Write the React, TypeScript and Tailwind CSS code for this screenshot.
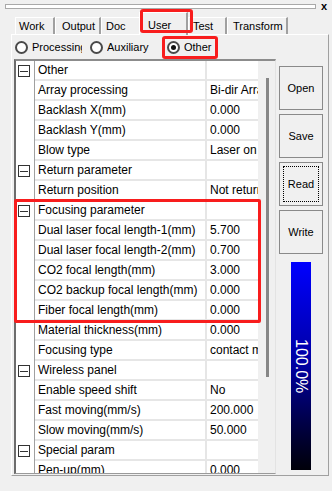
import React from 'react';

type Row = { name: string; value?: string; cat?: boolean };

const rows: Row[] = [
  { name: 'Other', cat: true },
  { name: 'Array processing', value: 'Bi-dir Array' },
  { name: 'Backlash X(mm)', value: '0.000' },
  { name: 'Backlash Y(mm)', value: '0.000' },
  { name: 'Blow type', value: 'Laser on blow' },
  { name: 'Return parameter', cat: true },
  { name: 'Return position', value: 'Not return' },
  { name: 'Focusing parameter', cat: true },
  { name: 'Dual laser focal length-1(mm)', value: '5.700' },
  { name: 'Dual laser focal length-2(mm)', value: '0.700' },
  { name: 'CO2 focal length(mm)', value: '3.000' },
  { name: 'CO2 backup focal length(mm)', value: '0.000' },
  { name: 'Fiber focal length(mm)', value: '0.000' },
  { name: 'Material thickness(mm)', value: '0.000' },
  { name: 'Focusing type', value: 'contact mode' },
  { name: 'Wireless panel', cat: true },
  { name: 'Enable speed shift', value: 'No' },
  { name: 'Fast moving(mm/s)', value: '200.000' },
  { name: 'Slow moving(mm/s)', value: '50.000' },
  { name: 'Special param', cat: true },
  { name: 'Pen-up(mm)', value: '0.000' },
];

const tabs = [
  { label: 'Work', w: 'w-[40px]', pl: 'pl-[3px]' },
  { label: 'Output', w: 'w-[46px]', pl: 'pl-[6px]' },
  { label: 'Doc', w: 'w-[40px]', pl: 'pl-[4px]' },
  { label: 'User', w: 'w-[49px]', pl: 'pl-[8px]', active: true },
  { label: 'Test', w: 'w-[39px]', pl: 'pl-[4px]' },
  { label: 'Transform', w: 'w-[61px]', pl: 'pl-[5px]' },
];

function Minus() {
  return (
    <div className="w-[12px] h-[12px] border border-[#333] bg-white flex items-center justify-center">
      <div className="w-[8px] h-px bg-[#333]" />
    </div>
  );
}

function Radio({ label, checked, width }: { label: string; checked?: boolean; width: string }) {
  return (
    <div className="flex items-center gap-[4px]">
      <div className="w-[13px] h-[13px] rounded-full border-2 border-[#4a4a4a] bg-white flex items-center justify-center">
        {checked && <div className="w-[5px] h-[5px] rounded-full bg-[#111]" />}
      </div>
      <span className={`${width} overflow-hidden whitespace-nowrap`}>{label}</span>
    </div>
  );
}

function Btn({ label, focus }: { label: string; focus?: boolean }) {
  return (
    <div className="h-[44px] border border-[#8a8a8a] bg-[#f0f0f0] p-[3px] flex">
      <div
        className={`flex-1 flex items-center justify-center ${
          focus ? 'border border-dotted border-black' : ''
        }`}
      >
        {label}
      </div>
    </div>
  );
}

export default function App() {
  return (
    <div className="w-[332px] h-[491px] bg-[#f0f0f0] overflow-hidden relative text-black text-[11px] font-['Liberation_Sans',Arial,sans-serif]">
      {/* grip bar */}
      <div className="h-[13px] flex items-center pl-[5px] pr-[5px]">
        <div className="flex-1 h-[5px] border border-[#a9a9a9] bg-white" />
        <span className="ml-[5px] text-[11px] font-bold leading-none">x</span>
      </div>

      {/* tabs */}
      <div className="h-[21px] flex items-end pl-[15px] relative z-10">
        {tabs.map((t) =>
          t.active ? (
            <div
              key={t.label}
              className={`${t.w} ${t.pl} -ml-[2px] h-[23px] -mb-[1px] pt-[4px] bg-[#f0f0f0] border-t border-l border-white border-r-2 border-r-[#a0a0a0] relative z-10 flex items-start`}
            >
              {t.label}
            </div>
          ) : (
            <div
              key={t.label}
              className={`${t.w} ${t.pl} h-[17px] border-t border-l border-white border-r-2 border-r-[#a0a0a0] flex items-center`}
            >
              {t.label}
            </div>
          ),
        )}
      </div>

      {/* tab panel */}
      <div className="ml-[11px] w-[318px] h-[442px] border-t border-l border-t-white border-l-white border-r border-b border-r-[#a0a0a0] border-b-[#a0a0a0] flex flex-col">
        <div className="h-[24px] flex items-center pl-[3px]">
          <Radio label="Processing" width="w-[50px]" />
          <div className="w-[8px]" />
          <Radio label="Auxiliary" width="w-[60px]" />
          <Radio label="Other" checked width="w-[40px]" />
        </div>

        <div className="flex pl-[2px]">
          {/* property grid */}
          <div className="w-[262px] h-[415px] border-t-2 border-l-2 border-r border-b border-t-[#8c8c8c] border-l-[#6d6d6d] border-r-[#e3e3e3] border-b-[#9a9a9a] flex overflow-hidden text-[12px]">
            <div className="flex flex-col">
              {rows.map((r) => (
                <div key={r.name} className="flex h-[20px] shrink-0">
                  <div className="w-[19px] bg-white border-r border-[#a0a0a0] flex items-center pl-[2px]">
                    {r.cat && <Minus />}
                  </div>
                  <div className="w-[172px] bg-white border-b-2 border-r-2 border-[#e6e6e6] pl-[3px] flex items-center whitespace-nowrap overflow-hidden">
                    {r.name}
                  </div>
                  <div className="w-[51px] bg-white border-b-2 border-[#e6e6e6] pl-[3px] flex items-center whitespace-nowrap overflow-hidden">
                    {r.value}
                  </div>
                </div>
              ))}
            </div>
            <div className="w-[17px] bg-[#f0f0f0] flex flex-col items-center pt-[17px] pl-[1px]">
              <div className="w-[3px] h-[299px] bg-[#868686]" />
            </div>
          </div>

          {/* buttons */}
          <div className="w-[44px] ml-[3px] pt-[7px] flex flex-col gap-[4px]">
            <Btn label="Open" />
            <Btn label="Save" />
            <Btn label="Read" focus />
            <Btn label="Write" />
            <div className="mt-[4px] mx-auto w-[20px] h-[208px] bg-linear-to-b from-[#0000ff] via-[#0000a0] to-[#00000a] flex items-center justify-center">
              <span className="[writing-mode:vertical-rl] text-white text-[16px] leading-none">100.0%</span>
            </div>
          </div>
        </div>
      </div>

      {/* red annotation boxes */}
      <div className="absolute left-[140px] top-[9px] w-[53px] h-[24px] border-[3px] border-[#f81d1d] rounded-[3px] z-20" />
      <div className="absolute left-[162px] top-[36px] w-[56px] h-[23px] border-[3px] border-[#f81d1d] rounded-[3px] z-20" />
      <div className="absolute left-[14px] top-[199px] w-[247px] h-[124px] border-[3px] border-[#f81d1d] rounded-[2px] z-20" />
    </div>
  );
}
